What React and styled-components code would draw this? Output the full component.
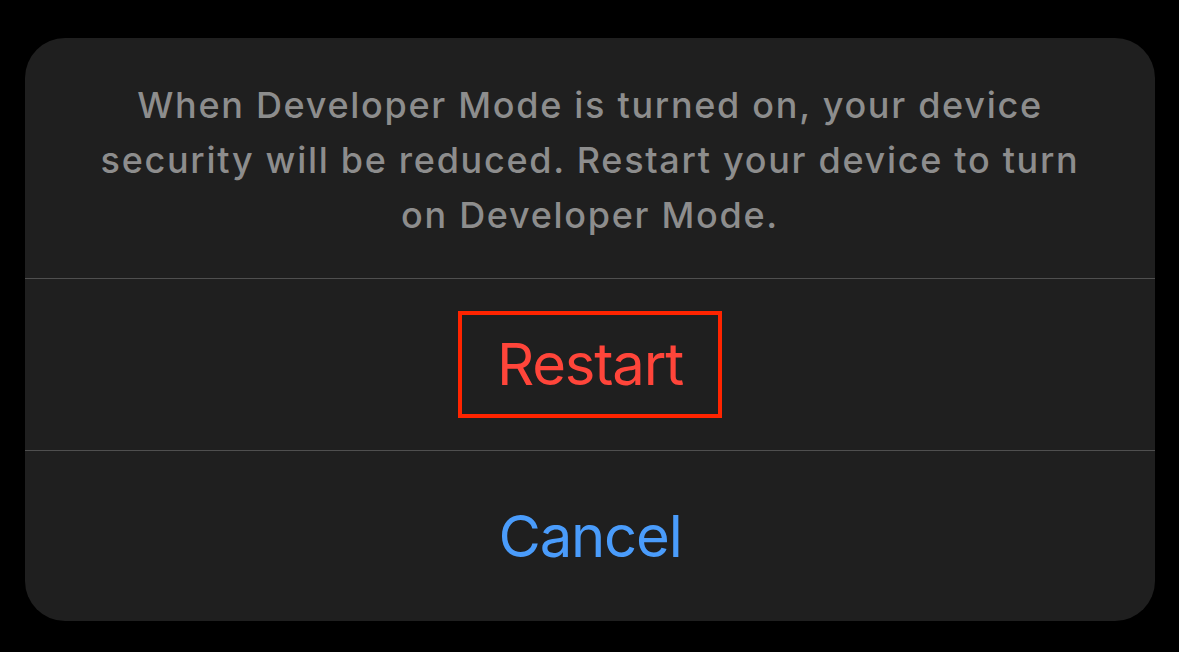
import React from "react";
import styled, { createGlobalStyle } from "styled-components";

const Global = createGlobalStyle`
  html, body { margin: 0; padding: 0; background: #000; }
  body { font-family: Inter, "Noto Sans", sans-serif; -webkit-font-smoothing: antialiased; }
`;

const Page = styled.div`
  box-sizing: border-box;
  width: 1179px;
  height: 652px;
  padding: 38px 24px 31px 25px;
  background: #000;
`;

const Card = styled.div`
  height: 100%;
  display: flex;
  flex-direction: column;
  background: #1f1f1f;
  border-radius: 40px;
  overflow: hidden;
`;

const Message = styled.p`
  box-sizing: border-box;
  margin: 0;
  height: 240px;
  padding: 40px 64px 0;
  text-align: center;
  color: #8d8d8d;
  font-size: 36px;
  font-weight: 500;
  line-height: 55px;
  letter-spacing: 1.7px;
`;

const Divider = styled.div`
  height: 1px;
  background: #4f4f4f;
  flex: none;
`;

const ActionRow = styled.div`
  flex: 1;
  display: flex;
  align-items: center;
  justify-content: center;
`;

const ActionLabel = styled.span`
  font-size: 58px;
  font-weight: 400;
  line-height: 1;
  letter-spacing: -1.2px;
  color: ${(p) => (p.$tone === "destructive" ? "#ff453a" : "#4a9cfb")};
`;

const Highlight = styled.div`
  box-sizing: border-box;
  width: 264px;
  height: 107px;
  border: 4px solid #ff2400;
  display: flex;
  align-items: center;
  justify-content: center;
`;

export default function App() {
  return (
    <>
      <Global />
      <Page>
        <Card>
          <Message>
            When Developer Mode is turned on, your device security will be reduced. Restart your device to turn on Developer Mode.
          </Message>
          <Divider />
          <ActionRow>
            <Highlight>
              <ActionLabel $tone="destructive">Restart</ActionLabel>
            </Highlight>
          </ActionRow>
          <Divider />
          <ActionRow>
            <ActionLabel>Cancel</ActionLabel>
          </ActionRow>
        </Card>
      </Page>
    </>
  );
}
